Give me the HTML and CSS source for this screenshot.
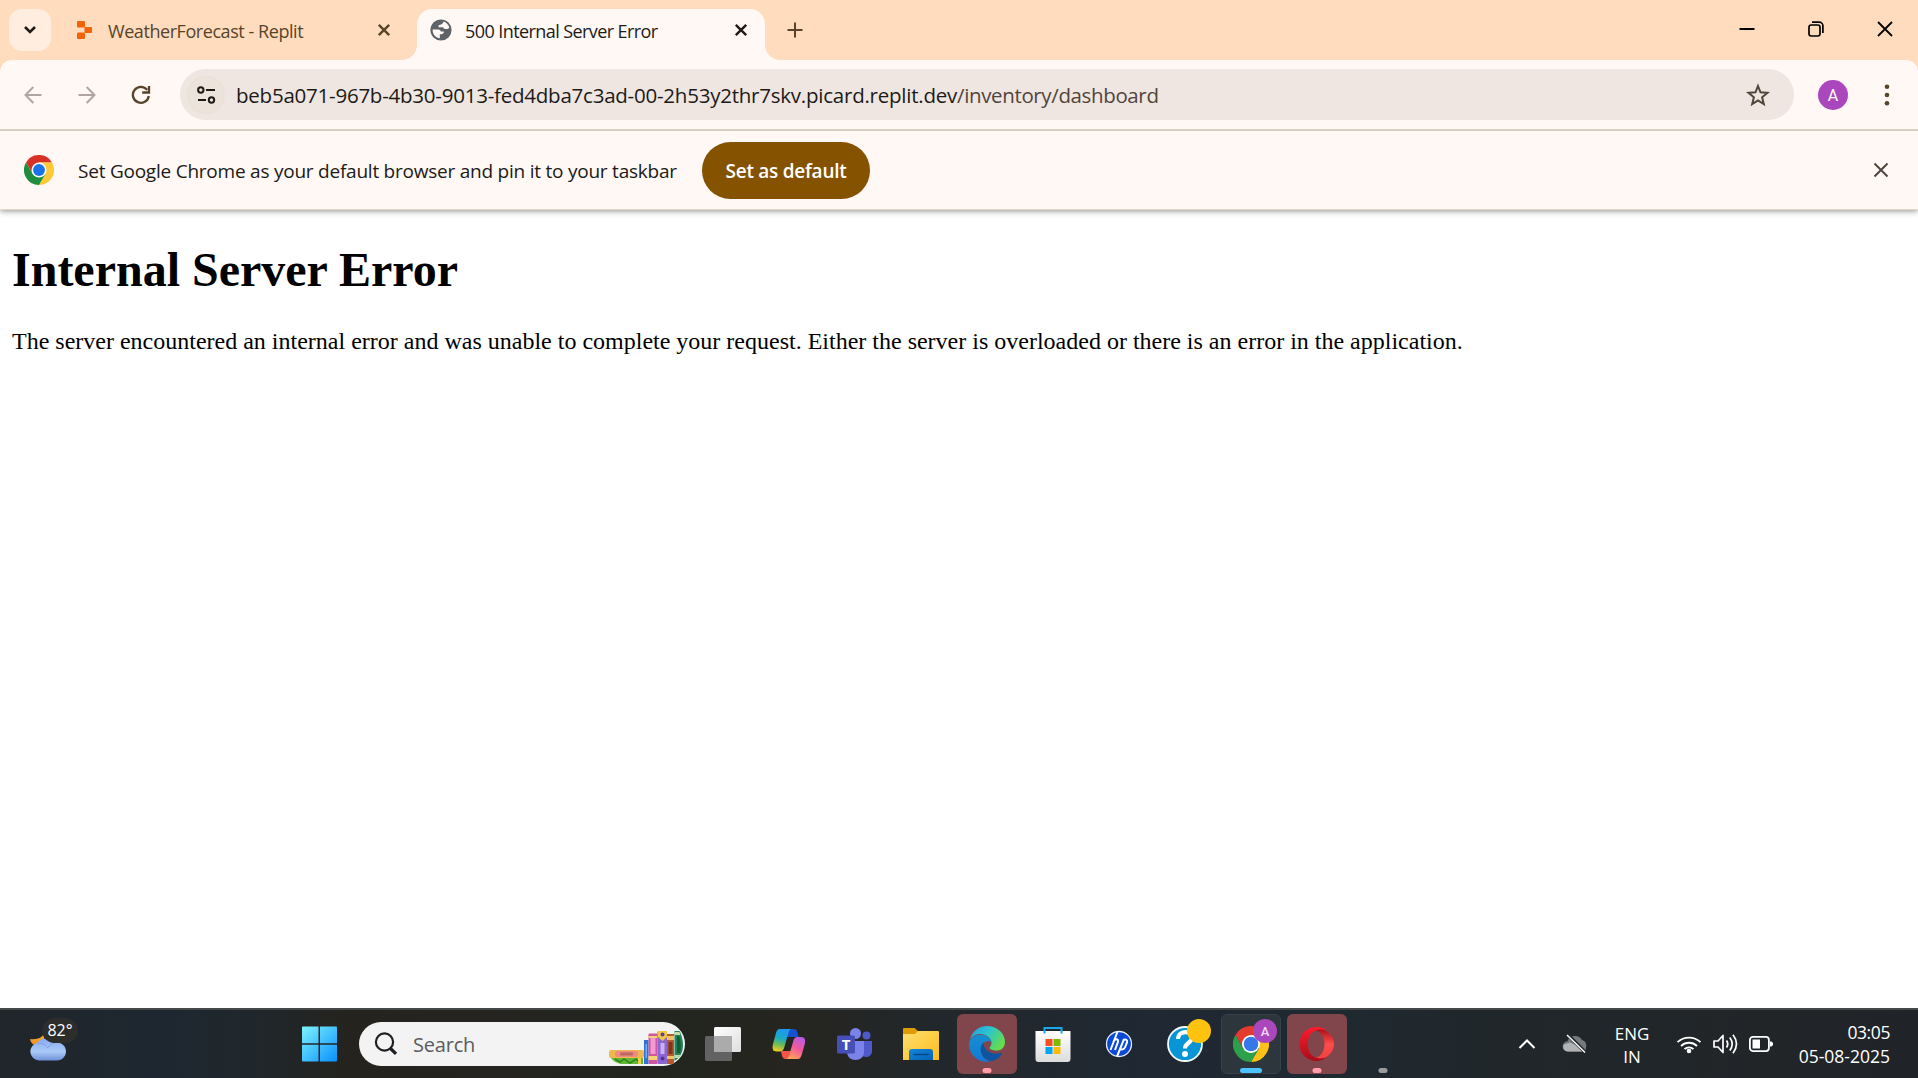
FILE: index.html
```html
<!DOCTYPE html>
<html lang="en">
<head>
<meta charset="utf-8">
<title>500 Internal Server Error</title>
<link rel="stylesheet" href="styles.css">
</head>
<body>
<div class="screen">
  <header class="tabstrip">
    <button class="tab-search" aria-label="Search tabs"><svg width="14" height="10" viewBox="0 0 14 10"><path d="M2 2l5 5 5-5" fill="none" stroke="#1f1a16" stroke-width="2.6"/></svg></button>
    <div class="tab">
      <svg class="favicon" width="22" height="22" viewBox="0 0 22 22"><g fill="#f26207"><rect x="4" y="2" width="8" height="6.500" rx="1"/><rect x="11.500" y="8" width="7.500" height="6" rx="1"/><rect x="4" y="13.500" width="8" height="6.500" rx="1"/></g></svg>
      <span class="tab-title t-replit">WeatherForecast - Replit</span>
      <svg class="tab-close" width="14" height="14" viewBox="0 0 14 14"><path d="M1.800 1.800l10.400 10.400M12.200 1.800L1.800 12.200" stroke="#57442a" stroke-width="2.400"/></svg>
    </div>
    <div class="tab tab-active">
      <svg class="favicon" width="22" height="22" viewBox="0 0 22 22"><circle cx="11" cy="11" r="10.600" fill="#5f6368"/><path d="M13.400 2.600c2.700.8 5 3 5.900 5.800-.7 1.200-1.700 1.700-3 1.700-1.600 0-2.700-.5-3.100-1.900H8.600v-2l2.600-.8c1.400-.6 2.200-1.500 2.200-2.800zM2.600 10.500h5.600c1.500 0 2.500.8 2.600 2.100h3.200c-.3 1.800-1.200 2.500-2.800 2.600H9.800v4.100c-4.400-.6-7.200-4.200-7.200-8.800z" fill="#fff8f5"/></svg>
      <span class="tab-title t-error">500 Internal Server Error</span>
      <svg class="tab-close" width="14" height="14" viewBox="0 0 14 14"><path d="M1.800 1.800l10.400 10.400M12.200 1.800L1.800 12.200" stroke="#201a17" stroke-width="2.400"/></svg>
    </div>
    <svg class="new-tab" width="16" height="16" viewBox="0 0 16 16"><path d="M8 .5v15M.5 8h15" stroke="#57442a" stroke-width="2"/></svg>
    <div class="window-controls">
      <svg width="16" height="16" viewBox="0 0 16 16"><path d="M.5 8h15" stroke="#000" stroke-width="2"/></svg>
      <svg width="16" height="16" viewBox="0 0 16 16"><rect x="1" y="4" width="11" height="11" rx="2.200" fill="none" stroke="#000" stroke-width="1.700"/><path d="M4 1.200h7.300a3.600 3.600 0 0 1 3.600 3.600V12" fill="none" stroke="#000" stroke-width="1.700"/></svg>
      <svg width="16" height="16" viewBox="0 0 16 16"><path d="M1 1l14 14M15 1L1 15" stroke="#000" stroke-width="1.800"/></svg>
    </div>
  </header>

  <nav class="toolbar">
    <svg width="18" height="18" viewBox="0 0 18 18"><path d="M17.500 9H2M9.300 1L1.500 9l7.800 8" fill="none" stroke="#b0a5a0" stroke-width="2"/></svg>
    <svg class="forward" width="18" height="18" viewBox="0 0 18 18"><path d="M.5 9H16M8.700 1l7.800 8-7.800 8" fill="none" stroke="#b0a5a0" stroke-width="2"/></svg>
    <svg class="reload" width="20" height="20" viewBox="0 0 20 20"><path d="M16.200 4.900A8 8 0 1 0 17.800 11" fill="none" stroke="#57442a" stroke-width="2.300"/><path d="M18 1v6.500h-6.800" fill="none" stroke="#57442a" stroke-width="2.300"/></svg>
    <div class="omnibox">
      <span class="site-info"><svg width="20" height="20" viewBox="0 0 20 20"><g fill="none" stroke="#1f1a17" stroke-width="2"><circle cx="4.800" cy="5" r="2.700"/><path d="M10 5h9M2 15h8"/><circle cx="15.500" cy="15" r="2.700"/></g></svg></span>
      <span class="url"><span class="host">beb5a071-967b-4b30-9013-fed4dba7c3ad-00-2h53y2thr7skv.picard.replit.dev</span><span class="path">/inventory/dashboard</span></span>
      <svg class="star" width="24" height="24" viewBox="0 0 24 24"><path d="M12 3l2.500 6.300 7 .5-5.400 4.500 1.700 6.800-5.800-3.700-5.800 3.700 1.700-6.800-5.400-4.500 7-.5z" fill="none" stroke="#51443b" stroke-width="2"/></svg>
    </div>
    <span class="avatar">A</span>
    <svg class="menu" width="6" height="22" viewBox="0 0 6 22"><g fill="#57442a"><circle cx="3" cy="2.700" r="2.300"/><circle cx="3" cy="11" r="2.300"/><circle cx="3" cy="19.300" r="2.300"/></g></svg>
  </nav>

  <aside class="infobar">
    <svg width="30" height="30" viewBox="0 0 48 48"><path d="M3.200 12A24 24 0 0 1 44.800 12L24 12 13.600 30z" fill="#d93025"/><path d="M44.800 12A24 24 0 0 1 24 48L34.400 30 24 12z" fill="#fdc936"/><path d="M24 48A24 24 0 0 1 3.200 12L13.600 30 34.400 30z" fill="#1e8e3e"/><circle cx="24" cy="24" r="12" fill="#fff"/><circle cx="24" cy="24" r="9.500" fill="#1a73e8"/></svg>
    <span class="infobar-text">Set Google Chrome as your default browser and pin it to your taskbar</span>
    <button class="default-button"><span>Set as default</span></button>
    <svg class="infobar-close" width="16" height="16" viewBox="0 0 16 16"><path d="M1.500 1.500l13 13M14.500 1.500l-13 13" stroke="#51443b" stroke-width="2"/></svg>
  </aside>

  <main class="page">
    <h1>Internal Server Error</h1>
    <p>The server encountered an internal error and was unable to complete your request. Either the server is overloaded or there is an error in the application.</p>
  </main>

  <footer class="taskbar">
    <div class="weather">
      <svg width="38" height="30" viewBox="0 0 38 30"><defs><linearGradient id="moon" x1="0" y1="0" x2="0" y2="1"><stop offset="0" stop-color="#f9b33a"/><stop offset="1" stop-color="#ee8a1d"/></linearGradient><linearGradient id="cloud" x1="0" y1="0" x2="0" y2="1"><stop offset="0" stop-color="#86aaf0"/><stop offset=".6" stop-color="#abcaf8"/><stop offset="1" stop-color="#6f90da"/></linearGradient></defs><path d="M15 0c-1 4-6 7-14 6 1 5 5 7 9 7l5-6z" fill="url(#moon)"/><path d="M10 27.500a9 9 0 0 1-1.500-17.800A10 10 0 0 1 25 10a9 9 0 1 1 3 17.500z" fill="url(#cloud)"/><path d="M8.500 11c4-1.500 7.500 0 10 4 2.200-3 4-4.500 7-5" fill="none" stroke="#789ce8" stroke-width=".8"/></svg>
      <span class="temp">82°</span>
    </div>
    <div class="apps">
      <span class="app"><svg class="start" width="36" height="36" viewBox="0 0 36 36"><defs><linearGradient id="win" x1="0" y1="0" x2="1" y2="1"><stop offset="0" stop-color="#7df3ff"/><stop offset="1" stop-color="#0a90fb"/></linearGradient></defs><path fill="url(#win)" d="M2 .5H17.500v16.700H1V1.500a1 1 0 0 1 1-1zM19 .5H35a1 1 0 0 1 1 1v15.700H19zM1 18.700H17.500v16.800H2a1 1 0 0 1-1-1zM19 18.700H36v15.800a1 1 0 0 1-1 1H19z"/></svg></span>
      <div class="search">
        <svg width="24" height="24" viewBox="0 0 24 24"><circle cx="10.500" cy="10" r="8.600" fill="none" stroke="#1d1f22" stroke-width="2.200"/><path d="M16.500 16.500l5.500 5.300" stroke="#1d1f22" stroke-width="3.200"/></svg>
        <span class="search-text">Search</span>
        <svg class="books" width="78" height="44" viewBox="0 0 78 44"><rect x="2" y="28" width="35" height="8" rx="2" fill="#edb94f"/><rect x="8" y="29" width="23" height="6" rx="3" fill="#f08a80"/><rect x="13" y="30.500" width="13" height="3" rx="1" fill="#b96862"/><path d="M4 36h32v6H14c-5-1-8-3-10-6z" fill="#64b733"/><path d="M8 37l5 3 4-3 6 4 6-4 4 4" fill="none" stroke="#2c841f" stroke-width="1.500"/><path d="M31 36h3v6h-3z" fill="#f0d34c"/><rect x="37" y="18" width="4.500" height="24" fill="#2c72d9"/><rect x="38.500" y="22" width="1.500" height="14" fill="#73adf5"/><rect x="41.500" y="11.500" width="9" height="30.500" rx="1" fill="#cf579f"/><rect x="43.500" y="16" width="5" height="16" fill="#f29bd0"/><path d="M41.500 14h9v2h-9zM41.500 34h9v4h-9z" fill="#f7d274"/><rect x="50.500" y="9" width="9.500" height="33" rx="1" fill="#8a65d5"/><path d="M51 9h9v6l-4.500 4-4.500-4z" fill="#f1c83f"/><circle cx="55.500" cy="12.500" r="2" fill="#5e40a8"/><rect x="53.500" y="21" width="4" height="11" fill="#c8b2f6"/><circle cx="55.500" cy="36.500" r="2" fill="#4f3698"/><rect x="60" y="12" width="7" height="30" fill="#b75b2f"/><rect x="61.500" y="20" width="4" height="12" fill="#7e351d"/><path d="M60 14h7v4h-7zM60 34h7v3h-7z" fill="#f0c269"/><path d="M67.500 9h5c3 5 4.500 14 2.800 20-1.800 5-4.300 8-7.800 10z" fill="#248358"/><path d="M70 14h2c2 5 2.500 11 1 17h-3z" fill="#135c3a"/><path d="M67.500 10h5l1 3h-6zM67.500 33h6l-2 3h-4z" fill="#bcdfa2"/></svg>
      </div>
      <span class="app app-first"><svg width="38" height="36" viewBox="0 0 38 36"><defs><linearGradient id="tv" x1="0" y1="0" x2="1" y2="1"><stop offset="0" stop-color="#fff"/><stop offset="1" stop-color="#dedede"/></linearGradient></defs><rect x="1" y="10" width="27" height="25" rx="1.500" fill="#626262"/><rect x="10" y="1" width="27" height="25" rx="1.500" fill="url(#tv)"/><path d="M10 10h18v16H11.500a1.500 1.500 0 0 1-1.500-1.500z" fill="#ababab"/></svg></span>
      <span class="app"><svg width="36" height="34" viewBox="0 0 36 34"><defs><linearGradient id="ca" x1=".5" y1="0" x2=".3" y2="1"><stop offset="0" stop-color="#2098ee"/><stop offset=".4" stop-color="#18a9c8"/><stop offset=".7" stop-color="#70bd51"/><stop offset="1" stop-color="#f6cb20"/></linearGradient><linearGradient id="cb" x1=".8" y1="0" x2=".3" y2="1"><stop offset="0" stop-color="#b65be6"/><stop offset=".5" stop-color="#f1599c"/><stop offset="1" stop-color="#ffa455"/></linearGradient></defs><path d="M17 2h5.500c2.500 0 3.400 1.500 4 4l1.200 4H21l-5 0z" fill="#1651cf"/><path d="M10 24h10l-3 8h-2.500c-2 0-3-1.400-3.600-3.500z" fill="#f2564a"/><path d="M8.500 2H21c-2 0-3 2-3.600 4l-4 14c-.8 3-2.200 4.500-4.700 4.500H5.500C1.500 24.500 1 21 2 17L5 6c.6-2.300 1.700-4 3.500-4z" fill="url(#ca)"/><path d="M27 32H14.500c2 0 3.200-2 3.800-4l4-14c.8-3 2-4 4.500-4H30c4.300 0 4.600 3.500 3.800 7l-3 10.500c-.8 2.700-1.800 4.500-3.800 4.500z" fill="url(#cb)"/></svg></span>
      <span class="app"><svg width="38" height="34" viewBox="0 0 38 34"><circle cx="30.500" cy="8.500" r="4" fill="#5059c9"/><path d="M25 14h11v10c0 4-3 6-6 6-2 0-4-1-5-2z" fill="#5059c9"/><circle cx="19.500" cy="6.500" r="5.500" fill="#7b83eb"/><path d="M11 14h17v11c0 5-4 8-8.500 8S11 30 11 25z" fill="#7b83eb"/><rect x="1" y="8.500" width="18" height="18" rx="1.500" fill="#464eb8"/><text x="10" y="22.500" class="teams-letter" text-anchor="middle">T</text></svg></span>
      <span class="app"><svg width="36" height="34" viewBox="0 0 36 34"><defs><linearGradient id="fo" x1="0" y1="0" x2="1" y2="1"><stop offset="0" stop-color="#ffdf72"/><stop offset="1" stop-color="#fcbc19"/></linearGradient><linearGradient id="fb" x1="0" y1="0" x2="1" y2="1"><stop offset="0" stop-color="#1486dc"/><stop offset="1" stop-color="#0564b5"/></linearGradient></defs><path d="M0 2a1 1 0 0 1 1-1h10.500l3.500 3v6H0z" fill="#df9c06"/><path d="M0 7h12l3-3h20a1 1 0 0 1 1 1v28H0z" fill="url(#fo)"/><path d="M6 33v-8a3 3 0 0 1 3-3h18a3 3 0 0 1 3 3v8z" fill="url(#fb)"/><path d="M10.500 27.500h15" stroke="#084a86" stroke-width="1.500"/></svg></span>
      <span class="app app-alert"><svg width="36" height="36" viewBox="0 0 36 36"><defs><linearGradient id="e1" x1="0" y1="0" x2="1" y2=".5"><stop offset="0" stop-color="#239be0"/><stop offset=".5" stop-color="#2bc3d2"/><stop offset="1" stop-color="#63dc50"/></linearGradient><linearGradient id="e2" x1="0" y1="0" x2="0" y2="1"><stop offset="0" stop-color="#178fcd"/><stop offset="1" stop-color="#1278d8"/></linearGradient></defs><path d="M1 14C3 5 10 0 18 0c10 0 18 7 18 16 0 6-4 8.500-8.500 8.500-4 0-7-1.200-7-2.700 0-1 2-1.800 2-4.800C22.500 12 17 8 11 8c-4 0-8 2-10 6z" fill="url(#e1)"/><path d="M0 18C0 13 5 8.700 11 8.700c6.500 0 11 3.300 11.500 7.300-3-2.500-9-.5-10 5C11 29 16 35 22 35c-1.200.6-3 .8-4 .8C8 36 0 28 0 18z" fill="url(#e2)"/><path d="M15 16c-7 6-2 18 7.500 19.300C27.500 34 31 31.500 33 27.500c.4-1-.3-1.300-1.200-.8-3.300 1.700-9 1.300-12.800-1.500-3.500-2.500-5-6-4-9.200z" fill="#0e55a1"/></svg><i class="mark mark-pink"></i></span>
      <span class="app"><svg width="36" height="36" viewBox="0 0 36 36"><defs><linearGradient id="st" x1="0" y1="0" x2="0" y2="1"><stop offset="0" stop-color="#fff"/><stop offset="1" stop-color="#dcdcdc"/></linearGradient></defs><path d="M.5 5H35.500v28a3 3 0 0 1-3 3h-29a3 3 0 0 1-3-3z" fill="url(#st)"/><path d="M9.500 7.500V2h17v5.500" fill="none" stroke="#1ba8e8" stroke-width="2"/><path d="M10.500 13h7v7h-7z" fill="#f25022"/><path d="M18.500 13h7v7h-7z" fill="#7fba00"/><path d="M10.500 21h7v7h-7z" fill="#00a4ef"/><path d="M18.500 21h7v7h-7z" fill="#ffb900"/></svg></span>
      <span class="app"><svg width="28" height="28" viewBox="0 0 28 28"><circle cx="14" cy="14" r="12.500" fill="#0a48d6" stroke="#e8eefc" stroke-width="1.300"/><path d="M12.400 2L5.500 20M8.400 12.200q.8-3 3-3t1.500 3L10 20M19 9.200L12 26.500M18 10q5-1.600 4 2.400l-2 5q-1.200 2.500-4.200 2" fill="none" stroke="#fff" stroke-width="2"/></svg></span>
      <span class="app"><svg width="38" height="38" viewBox="0 0 38 38"><circle cx="19" cy="19" r="17" fill="#0795d6" stroke="#f2faff" stroke-width="1.800"/><path d="M12 14c0-9 14-9 14-1.500 0 5.500-7 5-7 11" fill="none" stroke="#fff" stroke-width="4.200"/><circle cx="19" cy="29" r="3" fill="#fff"/></svg><i class="badge badge-yellow"></i></span>
      <span class="app app-current"><svg width="36" height="36" viewBox="0 0 48 48"><path d="M3.200 12A24 24 0 0 1 44.800 12L24 12 13.600 30z" fill="#e33b2e"/><path d="M44.800 12A24 24 0 0 1 24 48L34.400 30 24 12z" fill="#fbc116"/><path d="M24 48A24 24 0 0 1 3.200 12L13.600 30 34.400 30z" fill="#2da04b"/><circle cx="24" cy="24" r="12" fill="#fff"/><circle cx="24" cy="24" r="9.700" fill="#3478ea"/></svg><i class="badge badge-purple">A</i><i class="mark mark-blue"></i></span>
      <span class="app app-alert"><svg width="36" height="36" viewBox="0 0 36 36"><defs><linearGradient id="o1" x1="0" y1="0" x2="0" y2="1"><stop offset="0" stop-color="#ff1b2d"/><stop offset="1" stop-color="#a80d1b"/></linearGradient><linearGradient id="o2" x1="0" y1="0" x2="0" y2="1"><stop offset="0" stop-color="#a30c13"/><stop offset=".5" stop-color="#ff4b4b"/><stop offset="1" stop-color="#f04040"/></linearGradient></defs><path d="M11.500 6c3-4 9.500-5.500 15-1.300C32 8 35 13 35 18s-3 10.500-8.500 13.500c-5.500 4-12 2.500-15-1.500 3 1.500 6.500 2 9 0 3.500-3 5-7.500 5-12s-1.500-9-5-12c-2.500-2-6-1.500-9 0z" fill="url(#o2)"/><path fill-rule="evenodd" d="M18 1c4 0 7 1.500 9.500 4C21 2 15 4 11.500 8 8 13 8 23 11.500 28c3.500 4 9.500 6 16 3-2.500 2.500-5.500 4-9.500 4C8 35 .5 28 .5 18S8 1 18 1z" fill="url(#o1)"/></svg><i class="mark mark-pink"></i></span>
      <span class="app"><i class="mark mark-grey"></i></span>
    </div>
    <div class="tray">
      <svg width="18" height="12" viewBox="0 0 18 12"><path d="M1.500 10L9 2.500l7.500 7.500" fill="none" stroke="#fff" stroke-width="2"/></svg>
      <svg class="onedrive" width="26" height="20" viewBox="0 0 26 20"><path d="M6 17.500a5 5 0 0 1-.5-10.300A8 8 0 0 1 20 6a6 6 0 0 1 0 11.500z" fill="#777a7d"/><path d="M6 17.500c-4 0-6-4-4-7l6-2 16 7-3.500 2z" fill="#b2b3b4"/><path d="M6 1l18 18" stroke="#252a2e" stroke-width="3.500"/><path d="M5 1l18 17.500" stroke="#fff" stroke-width="1.400"/></svg>
      <span class="lang"><span>ENG</span><span>IN</span></span>
      <svg class="wifi" width="26" height="20" viewBox="0 0 26 20"><g fill="none" stroke="#fff" stroke-width="1.800"><path d="M1.500 8.200a16.500 16.500 0 0 1 23 0"/><path d="M5 12a11.500 11.500 0 0 1 16 0"/><path d="M8.500 15.200a6.500 6.500 0 0 1 9 0"/></g><circle cx="13" cy="17" r="2.300" fill="#fff"/></svg>
      <svg class="speaker" width="26" height="22" viewBox="0 0 26 22"><g fill="none" stroke="#fff" stroke-width="1.700" stroke-linejoin="round"><path d="M2 8h4l5-5.500v17L6 14H2z"/><path d="M14.500 7.500q2.500 3.500 0 7M17.800 4.500q4.800 6.500 0 13M21 1.800q7 9.200 0 18.400"/></g></svg>
      <svg class="battery" width="26" height="18" viewBox="0 0 26 18"><rect x="1.900" y="1.900" width="19" height="14.200" rx="3" fill="none" stroke="#fff" stroke-width="1.800"/><rect x="4.500" y="4.500" width="7.500" height="9" fill="#fff"/><path d="M22 6.500h1.500l1.500 1.500v2l-1.500 1.500H22z" fill="#fff"/></svg>
      <span class="clock"><span class="time">03:05</span><span class="date">05-08-2025</span></span>
    </div>
  </footer>
</div>
</body>
</html>
```
FILE: styles.css
```css
* { box-sizing: border-box; }
body { margin: 0; font-family: "Open Sans", "Noto Sans", sans-serif; background: #fff; }
button { border: 0; padding: 0; font: inherit; }
svg { display: block; flex: none; }
.screen { width: 1918px; height: 1078px; display: flex; flex-direction: column; overflow: hidden; background: #ffdcbe; }

.tabstrip { height: 60px; flex: none; display: flex; align-items: flex-start; padding: 9px 0 0 9px; background: #ffdcbe; }
.tab-search { width: 42px; height: 42px; border-radius: 13px; background: #ffeddf; display: grid; place-items: center; }
.tab { position: relative; display: flex; align-items: center; height: 42px; width: 348px; margin-left: 18px; padding: 0 26px 0 4px; color: #57442a; }
.tab-title { margin-left: 13px; font-size: 18px; line-height: 24px; white-space: nowrap; padding-top: 2px; }
.t-replit { letter-spacing: -0.44px; }
.t-error { letter-spacing: -0.58px; }
.tab-close { margin-left: auto; }
.tab-active { height: 51px; margin-left: 0; padding: 0 17px 9px 13px; background: #fff8f5; border-radius: 15px 15px 0 0; color: #201a17; }
.tab-active::before, .tab-active::after { content: ""; position: absolute; bottom: 0; width: 15px; height: 15px; }
.tab-active::before { left: -15px; background: radial-gradient(circle at 0 0, transparent 14.5px, #fff8f5 15.2px); }
.tab-active::after { right: -15px; background: radial-gradient(circle at 100% 0, transparent 14.5px, #fff8f5 15.2px); }
.new-tab { margin: 13px 0 0 22px; }
.window-controls { margin: 12px 25px 0 auto; display: flex; gap: 53px; }

.toolbar { height: 71px; flex: none; display: flex; align-items: center; padding: 0 28px 0 24px; background: #fff8f5; border-bottom: 2px solid #d7cec4; position: relative; z-index: 2; border-radius: 12px 12px 0 0; }
.forward { margin-left: 36px; }
.reload { margin-left: 35px; }
.omnibox { width: 1614px; height: 51px; margin-left: 29px; border-radius: 26px; background: #efe6e1; display: flex; align-items: center; padding: 0 24px 0 8px; }
.site-info { width: 36px; height: 36px; border-radius: 50%; background: #ece3da; display: grid; place-items: center; box-shadow: 0 0 2px #e0d5cb; }
.url { margin-left: 12px; font-size: 20.5px; line-height: 28px; white-space: nowrap; color: #201a17; }
.host { letter-spacing: -0.23px; }
.path { color: #51443b; letter-spacing: -0.37px; }
.star { margin-left: auto; }
.avatar { width: 30px; height: 30px; margin-left: 24px; border-radius: 50%; background: #ab47bc; color: #fff; font: 16px/31px Roboto, sans-serif; text-align: center; }
.menu { margin-left: auto; }

.infobar { height: 79px; flex: none; display: flex; align-items: center; padding: 0 29px 0 24px; background: #fff8f5; border-bottom: 1px solid #e2d8cc; box-shadow: 0 1px 6px rgba(0, 0, 0, .45); position: relative; z-index: 1; }
.infobar-text { width: 600px; margin-left: 24px; padding-top: 2px; font-size: 19px; line-height: 28px; letter-spacing: -0.23px; white-space: nowrap; color: #201a17; }
.default-button { margin-left: 24px; padding-top: 2px; width: 168px; height: 57px; border-radius: 29px; background: #855300; color: #fff; font-size: 19px; font-weight: 600; letter-spacing: -0.26px; white-space: nowrap; }
.infobar-close { margin-left: auto; }

.page { flex: 1; min-height: 0; padding: 0 12px; font: 24px/normal "Liberation Serif", serif; color: #000; background: #fff; }
.page h1 { margin: 32px 0 31px; font-size: 48px; line-height: 55px; }
.page p { margin: 0; line-height: 27px; white-space: nowrap; }

.taskbar { height: 70px; flex: none; display: flex; align-items: center; border-top: 2px solid #46494a; background: linear-gradient(90deg, #20262a 0, #1e2731 160px, #20272c 250px, #25231e 350px, #252420 500px, #22251f 650px, #262520 790px, #22272a 920px, #1f2833 1150px, #1f2930 1350px, #20272b 1480px, #222528 1780px, #202428 100%); color: #fff; }
.weather { position: relative; width: 289px; height: 68px; padding: 23px 0 0 29px; }
.temp { position: absolute; left: 42px; top: 8px; width: 36px; height: 25px; border-radius: 13px; background: #2d2d2c; font-size: 16px; line-height: 24px; text-align: center; }
.apps { display: flex; align-items: center; gap: 6px; }
.app { position: relative; width: 60px; height: 60px; border-radius: 6px; display: grid; place-items: center; }
.app-first { margin-left: 2px; }
.app-alert { background: #80464b; }
.app-current { background: #2c363c; border: 1px solid #374047; }
.search { width: 326px; height: 44px; margin-left: 4px; border-radius: 22px; background: #f3f3f3; display: flex; align-items: center; padding: 0 0 0 15px; }
.search-text { margin-left: 15px; font-size: 20px; letter-spacing: -0.2px; color: #5c5c5c; }
.books { margin-left: auto; }
.mark { position: absolute; bottom: 1px; left: 50%; transform: translateX(-50%); width: 9px; height: 5px; border-radius: 3px; }
.mark-pink { background: #ff9dab; }
.mark-grey { background: #9a9c9d; }
.mark-blue { width: 22px; background: #4cc2ff; bottom: 0; }
.badge { position: absolute; top: 5px; right: 4px; width: 24px; height: 24px; border-radius: 50%; }
.badge-yellow { right: 4px; background: #ffc20e; }
.badge-purple { top: 4px; right: 3px; background: #ab47bc; color: #f1d8f5; font: 500 13px/25px Roboto, sans-serif; text-align: center; }
.teams-letter { font: 700 15px "Open Sans", sans-serif; fill: #fff; }

.tray { margin-left: auto; padding-right: 28px; display: flex; align-items: center; height: 68px; }
.onedrive { margin-left: 26px; }
.lang { display: flex; flex-direction: column; align-items: center; width: 50px; margin-left: 19px; font-size: 17px; line-height: 23px; padding-top: 2px; }
.wifi { margin-left: 19px; }
.speaker { margin-left: 10px; }
.battery { margin-left: 10px; }
.clock { display: flex; flex-direction: column; align-items: flex-end; width: 98px; margin-left: 18px; font-size: 17.5px; line-height: 24px; white-space: nowrap; }
.time { letter-spacing: -0.4px; }
```
